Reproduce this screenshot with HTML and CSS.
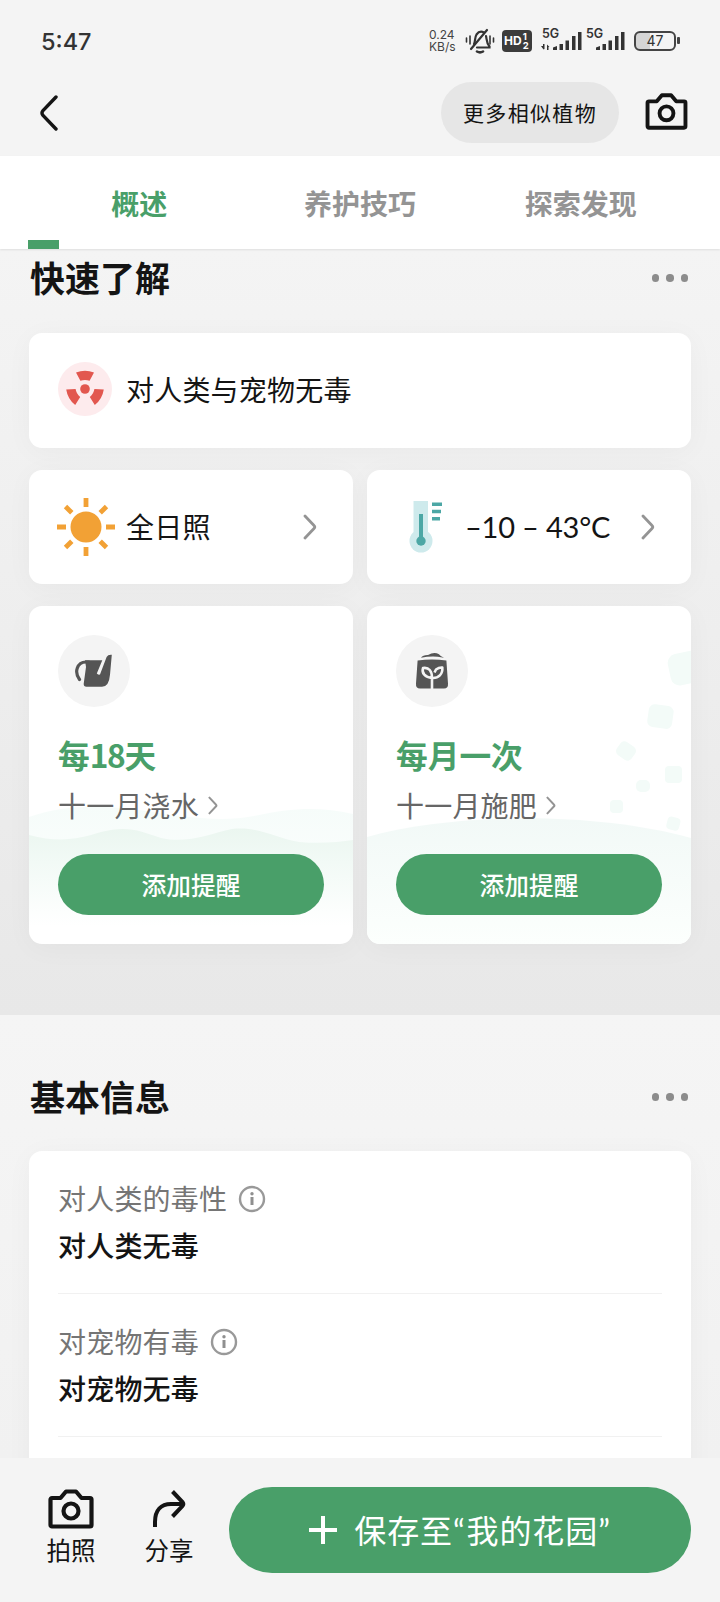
FILE: index.html
```html
<!DOCTYPE html>
<html lang="zh-CN">
<head>
<meta charset="utf-8">
<title>植物概述</title>
<link rel="stylesheet" href="styles.css">
</head>
<body>
<svg class="defs" width="0" height="0" aria-hidden="true">
  <symbol id="camera" viewBox="0 0 46 40">
    <path d="M4 9h8.500l5.500-6.500h10l5.500 6.500H42a1.500 1.500 0 0 1 1.500 1.500v25.500a1.500 1.500 0 0 1-1.500 1.500H4A1.500 1.500 0 0 1 2.500 36V10.500A1.500 1.500 0 0 1 4 9z"/>
    <circle cx="23" cy="22" r="7.500"/>
  </symbol>
  <symbol id="chevron" viewBox="0 0 14 26"><path d="M2 2l9 9.500q1.500 1.500 0 3L2 24"/></symbol>
  <symbol id="info" viewBox="0 0 28 28">
    <circle cx="14" cy="14" r="12" fill="none" stroke="#999" stroke-width="2.400"/>
    <circle cx="14" cy="8.800" r="1.700" fill="#8f8f8f"/><path d="M14 12v8" stroke="#8f8f8f" stroke-width="3"/>
  </symbol>
</svg>
<div class="screen">
  <div class="status">
    <span class="time">5:47</span>
    <div class="indicators">
      <div class="speed"><span>0.24</span><span>KB/s</span></div>
      <svg class="bell" width="30" height="26" viewBox="0 0 30 26" fill="none" stroke="#333" stroke-width="2.200" stroke-linecap="round">
        <path d="M1.500 10v4M5 8v8M28.500 10v4M25 8v8" stroke-width="1.600"/>
        <path d="M6 21L22 2"/><path d="M9 16c1.500-2.500.5-6.500 2.500-9.500 2-2.800 5-3.300 7.500-2M21 8c.8 3 .2 6.500 3.500 10.500v1H12"/><path d="M12 23.500q3 1.800 6 0" stroke-width="2.600"/>
      </svg>
      <span class="hd"><b>HD</b><i>1<br>2</i></span>
      <span class="signal"><em>5G</em>
        <svg width="42" height="21" viewBox="0 0 42 21" fill="#333"><path d="M1 16l2.500 3.500L4.500 19v-5H3v2zM7 20v-5.500L9.500 17H8.500v3zM13 17.500l4-1.500v4h-4zM19.500 14h3.500v6h-3.500zM25.500 10.500H29V20h-3.500zM32 6h3.500v14H32zM38 2h3.500v18H38z"/></svg>
      </span>
      <span class="signal second"><em>5G</em>
        <svg width="29" height="21" viewBox="0 0 29 21" fill="#333"><path d="M0 17.500l4-1.500v4H0zM6.500 14H10v6H6.500zM12.500 10.500H16V20h-3.500zM19 6h3.500v14H19zM25 2h3.500v18H25z"/></svg>
      </span>
      <span class="battery"><span class="cell">47</span></span>
    </div>
  </div>

  <header class="topbar">
    <svg class="back" width="20" height="36" viewBox="0 0 20 36"><path d="M17 2L4 15.500q-2 2.500 0 5L17 34"/></svg>
    <div class="actions">
      <button class="similar">更多相似植物</button>
      <svg class="cam" width="43" height="37"><use href="#camera"/></svg>
    </div>
  </header>

  <nav class="tabs">
    <a class="tab active">概述</a><a class="tab">养护技巧</a><a class="tab">探索发现</a>
    <span class="marker"></span>
  </nav>

  <section class="quick">
    <div class="heading"><h2>快速了解</h2><span class="dots"><i></i><i></i><i></i></span></div>
    <div class="cards">
      <div class="card fact wide">
        <svg class="fact-icon" width="56" height="56" viewBox="-28 -28 56 56">
          <circle r="27" fill="#fdebed"/><circle r="4.800" fill="#e2574f"/>
          <g fill="#e2574f"><path id="blade" d="M-9 -16.500Q0 -20 9 -16.500L4.600 -8.200Q0 -10 -4.600 -8.200z"/><use href="#blade" transform="rotate(120)"/><use href="#blade" transform="rotate(240)"/></g>
        </svg>
        <span class="fact-text">对人类与宠物无毒</span>
      </div>
      <div class="card fact">
        <svg class="fact-icon sun" width="58" height="58" viewBox="-29 -29 58 58" fill="#f2a135">
          <circle r="15.500"/>
          <g stroke="#f2a135" stroke-width="4.800"><path d="M0-29v9M0 20v9M-29 0h9M20 0h9M-20.500-20.500l6.300 6.300M20.500-20.500l-6.300 6.300M-20.500 20.500l6.300-6.300M20.500 20.500l-6.300-6.300"/></g>
        </svg>
        <span class="fact-text">全日照</span>
        <svg class="arrow" width="14" height="26"><use href="#chevron"/></svg>
      </div>
      <div class="card fact temp">
        <svg class="thermo" width="34" height="54" viewBox="0 0 34 54">
          <circle cx="12" cy="41" r="11.500" fill="#ceeaec"/><path d="M4.500 1h14.500v35H4.500z" fill="#ceeaec"/>
          <circle cx="12" cy="41" r="4.700" fill="#4ca7a5"/><path d="M10 14h4v26h-4zM23 2.500h10V6H23zM23 9.700h9v3.600h-9zM23 17h8v3.600h-8z" fill="#4ca7a5"/>
        </svg>
        <span class="degrees">–10 – 43°C</span>
        <svg class="arrow" width="14" height="26"><use href="#chevron"/></svg>
      </div>

      <div class="card care">
        <svg class="scene" width="324" height="338" viewBox="0 0 324 338">
          <defs>
            <linearGradient id="w1" x1="0" y1="0" x2="0" y2="1"><stop offset="0" stop-color="#f6fcfa"/><stop offset="1" stop-color="#fff"/></linearGradient>
            <linearGradient id="w2" x1="0" y1="0" x2="0" y2="1"><stop offset="0" stop-color="#ebf6f0"/><stop offset=".35" stop-color="#f2faf6"/><stop offset="1" stop-color="#fff"/></linearGradient>
          </defs>
          <path fill="url(#w1)" d="M0 211C35 199 70 199 110 204C150 210 190 217 225 210C262 202 290 200 324 208V320H0z"/>
          <path fill="url(#w2)" d="M0 229C30 237 50 233 72 226C98 219 112 225 132 232C158 238 180 228 203 223C230 220 245 232 270 236C292 238 310 236 324 234V320H0z"/>
        </svg>
        <span class="badge"><svg width="40" height="36" viewBox="0 0 40 36">
          <path d="M5.500 26.500C0 19 3 9.200 12 9H15" fill="none" stroke="#555" stroke-width="3.200" stroke-linecap="round"/>
          <path d="M11 7.200h17.300L22.800 20.500q1.200 1.600 3.200 1L32.600 4q1.400-2.600 5.200-2.200l-1.800 20Q35 33.800 28 33.800H12.500q-3 0-2.800-3L12 14z" fill="#555"/></svg></span>
        <h3>每<span>18</span>天</h3>
        <p>十一月浇水<svg width="10" height="19"><use href="#chevron"/></svg></p>
        <button class="remind">添加提醒</button>
      </div>
      <div class="card care">
        <svg class="scene" width="324" height="338" viewBox="0 0 324 338">
          <defs><linearGradient id="hill" x1="0" y1="0" x2="0" y2="1"><stop offset="0" stop-color="#f2f9f7"/><stop offset="1" stop-color="#fcfffd"/></linearGradient></defs>
          <path fill="url(#hill)" d="M0 231C85 207 225 205 324 232V338H0z"/>
          <g fill="#f3fbf8">
            <rect x="302" y="46" width="34" height="32" rx="9" transform="rotate(-12 319 62)"/>
            <rect x="281" y="99" width="25" height="23" rx="6" transform="rotate(8 293 110)"/>
            <rect x="250" y="137" width="18" height="16" rx="5" transform="rotate(35 259 145)"/>
            <rect x="298" y="160" width="17" height="17" rx="4"/>
            <rect x="269" y="174" width="14" height="12" rx="5"/>
            <rect x="243" y="194" width="13" height="13" rx="4"/>
            <rect x="300" y="211" width="13" height="13" rx="4" transform="rotate(15 306 217)"/>
          </g>
        </svg>
        <span class="badge"><svg width="34" height="38" viewBox="0 0 34 38">
          <path d="M6 5.800q2-3 7-2.800Q19-.5 24 2.200q1.500 2.300 5 3.600-7-1.200-11-1.200-6 0-12 1.200z" fill="#555"/>
          <path d="M2.600 8.600Q17 6.400 31.400 8.600L33 31.500q.4 5-4 5H5q-4.400 0-4-5z" fill="#555"/>
          <path d="M17 37V25M17 26C10 25.500 6.500 21 8 16 14 15 17 19 17 26zM17 26C23.500 26.500 28 22 27.300 15.500 24.500 15.300 23 16 21 17.500L19.500 20.500" fill="none" stroke="#f4f4f4" stroke-width="2.600" stroke-linejoin="round"/></svg></span>
        <h3>每月一次</h3>
        <p>十一月施肥<svg width="10" height="19"><use href="#chevron"/></svg></p>
        <button class="remind">添加提醒</button>
      </div>
    </div>
  </section>

  <section class="basic">
    <div class="heading"><h2>基本信息</h2><span class="dots"><i></i><i></i><i></i></span></div>
    <div class="card facts">
      <div class="row"><div class="label">对人类的毒性<svg width="28" height="28"><use href="#info"/></svg></div><div class="value">对人类无毒</div></div>
      <div class="row"><div class="label">对宠物有毒<svg width="28" height="28"><use href="#info"/></svg></div><div class="value">对宠物无毒</div></div>
    </div>
  </section>

  <footer class="bottombar">
    <div class="tool"><svg class="cam" width="46" height="40"><use href="#camera"/></svg><span>拍照</span></div>
    <div class="tool"><svg class="share" width="34" height="40" viewBox="0 0 34 40"><path d="M3 38V33C3 21.500 9 15 19 15h11M20.500 2.500l10 10.500q1.600 2 0 4l-10 10.500"/></svg><span>分享</span></div>
    <button class="save"><svg width="30" height="30" viewBox="0 0 30 30"><path d="M15 1v28M1 15h28"/></svg><span>保存至<q>“</q>我的花园<q>”</q></span></button>
  </footer>
</div>
</body>
</html>
```
FILE: styles.css
```css
* { box-sizing: border-box; }
body { margin: 0; font-family: "Noto Sans CJK SC", sans-serif; color: #141414; }
.defs { position: absolute; }
svg { display: block; flex: none; }
button { border: 0; padding: 0; font: inherit; display: flex; align-items: center; justify-content: center; }
h2, h3, p { margin: 0; }
.screen { width: 720px; height: 1602px; display: flex; flex-direction: column; overflow: hidden; background: #f4f4f4; }

.status { height: 70px; padding: 10px 40px 0 41px; display: flex; align-items: center; justify-content: space-between; flex: none; color: #333; font-family: Inter, sans-serif; }
.time { font-size: 23.500px; line-height: 30px; font-weight: 500; letter-spacing: 0; padding-top: 3px; }
.indicators { display: flex; align-items: center; height: 30px; padding-top: 1px; }
.speed { width: 36px; display: flex; flex-direction: column; font-size: 12px; line-height: 12px; color: #444; }
.speed span { height: 12px; }
.hd { width: 30px; height: 22px; margin-left: 7px; padding-left: 2px; border-radius: 4px; background: #3c3c3c; color: #fff; display: flex; align-items: center; font-size: 12px; }
.hd i { font: 700 9.500px/9px Inter, sans-serif; margin-left: 1px; }
.signal { position: relative; height: 22px; margin-left: 8px; }
.signal.second { margin-left: 14px; }
.signal em { position: absolute; left: 2px; top: -3px; font: 600 12.500px/13px Inter, sans-serif; }
.signal.second em { left: -10px; }
.battery { margin-left: 9px; display: flex; align-items: center; }
.battery::after { content: ""; width: 3px; height: 7px; margin-left: 1px; background: #444; border-radius: 1px; }
.cell { width: 42px; height: 20px; border: 2px solid #444; border-radius: 6px; font-size: 14px; line-height: 16px; text-align: center; background: linear-gradient(90deg, #d5d5d5 14px, transparent 14px); }

.topbar { height: 86px; flex: none; display: flex; justify-content: space-between; padding: 12px 32px 0 39px; }
.back { margin-top: 13px; fill: none; stroke: #141414; stroke-width: 3.400; stroke-linecap: round; }
.actions { display: flex; gap: 26px; }
.similar { width: 178px; height: 61px; padding-bottom: 2px; border-radius: 31px; background: #e6e6e6; color: #141414; font-size: 21px; letter-spacing: 1.350px; }
.cam { fill: none; stroke: #141414; stroke-width: 4.200; stroke-linejoin: round; }
.actions .cam { margin-top: 11px; }

.tabs { position: relative; z-index: 1; height: 93px; flex: none; padding: 0 29px; display: grid; grid-template-columns: repeat(3, 1fr); background: #fff; box-shadow: 0 1px 2px rgba(0,0,0,.09); }
.tab { display: flex; align-items: center; justify-content: center; font-size: 28px; font-weight: 700; color: #949494; }
.tab.active { color: #499f69; }
.marker { position: absolute; left: 28px; bottom: 0; width: 31px; height: 9px; background: #499f69; }

.quick { height: 766px; flex: none; padding: 4px 29px 0; background: linear-gradient(#f4f4f4, #eee 50%, #e8e8e8); }
.heading { height: 50px; padding: 0 3px 0 1px; display: flex; align-items: center; justify-content: space-between; }
h2 { font-size: 35px; line-height: 50px; font-weight: 700; padding-bottom: 3px; }
.dots { display: flex; gap: 7px; }
.dots i { width: 7.500px; height: 7.500px; border-radius: 50%; background: #8c8c8c; }
.cards { margin-top: 30px; display: grid; grid-template-columns: 324px 324px; column-gap: 14px; row-gap: 22px; }
.card { background: #fff; border-radius: 13px; box-shadow: 0 4px 28px rgba(0,0,0,.035); }
.fact { height: 114.500px; display: flex; align-items: center; padding: 0 36px 0 28px; }
.wide { grid-column: span 2; padding-bottom: 2px; }
.fact-icon { margin-right: 13px; }
.fact-icon.sun { margin-right: 11px; }
.fact-text { font-size: 28px; letter-spacing: .200px; line-height: 40px; padding-bottom: 1px; }
.arrow { margin-left: auto; }
.arrow, .care p svg { fill: none; stroke: #949494; stroke-width: 2.800; stroke-linecap: round; }
.temp { padding-left: 42px; }
.degrees { margin-left: 22px; font-family: Lato, sans-serif; font-size: 29px; letter-spacing: -.200px; white-space: nowrap; }

.care { position: relative; height: 338px; padding: 29px; overflow: hidden; }
.scene { position: absolute; left: 0; top: 0; z-index: 0; }
.care > :not(.scene) { position: relative; }
.badge { width: 72px; height: 72px; border-radius: 50%; background: #f4f4f4; display: flex; align-items: center; justify-content: center; }
h3 { margin-top: 23px; font-size: 31.700px; line-height: 48px; font-weight: 700; color: #499f69; }
h3 span { letter-spacing: -1.300px; }
.care p { margin-top: 7px; height: 40px; display: flex; align-items: center; gap: 9px; font-size: 28px; letter-spacing: .200px; line-height: 40px; color: #666; }
.remind { width: 266px; height: 61px; margin-top: 29px; border-radius: 31px; background: #499f69; color: #fff; font-size: 24.700px; font-weight: 500; padding-bottom: 1px; }

.basic { height: 443px; flex: none; overflow: hidden; padding: 57px 29px 0; background: linear-gradient(#f5f5f5, #f1f1f1); }
.facts { margin-top: 29px; height: 400px; padding: 0 29px; }
.row { height: 143px; padding-top: 25px; border-bottom: 1px solid #f1f1f1; }
.label { display: flex; align-items: center; gap: 11px; height: 44px; font-size: 28px; letter-spacing: .200px; line-height: 44px; color: #757575; }
.label svg { margin-top: 2px; }
.value { margin-top: 3px; font-size: 28px; letter-spacing: .200px; line-height: 44px; font-weight: 500; }

.bottombar { height: 144px; flex: none; padding: 29px 29px 0 22px; display: flex; background: #f4f4f4; }
.tool { width: 98px; padding-top: 2px; display: flex; flex-direction: column; align-items: center; font-size: 24.500px; line-height: 36px; }
.tool span { margin-top: 3px; }
.share { fill: none; stroke: #141414; stroke-width: 4; }
.save { width: 462px; height: 86px; margin-left: auto; border-radius: 43px; background: #499f69; color: #fff; font-size: 32px; letter-spacing: .900px; gap: 16px; }
.save > span { padding-bottom: 2px; }
.save svg { fill: none; stroke: #fff; stroke-width: 4; }
.save q { quotes: none; font-family: Lato, sans-serif; margin-right: 1px; }
```
